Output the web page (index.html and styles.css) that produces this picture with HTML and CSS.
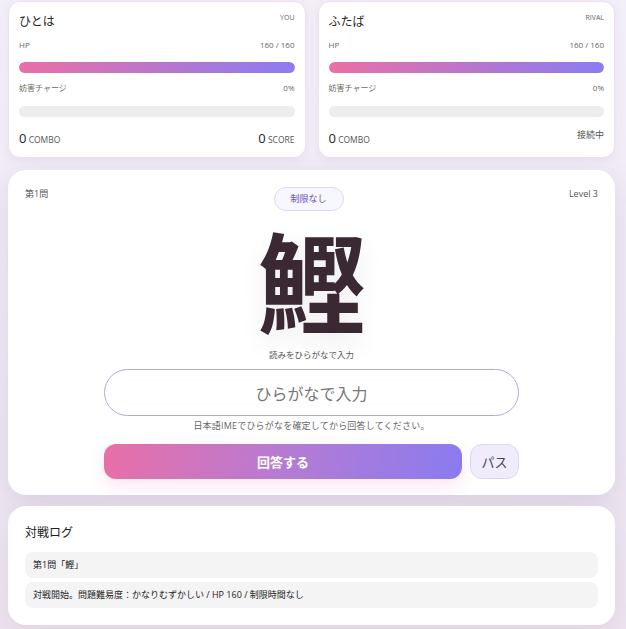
FILE: index.html
```html
<!DOCTYPE html>
<html lang="ja">
<head>
    <meta charset="UTF-8">
    <meta name="viewport" content="width=device-width, initial-scale=1.0">
    <title>難読漢字バトル</title>
    <link rel="stylesheet" href="styles.css">
</head>
<body>
    <div class="app">
        <div class="players">
            <div class="player-card">
                <div class="player-head">
                    <span class="player-name">ひとは</span>
                    <span class="player-tag">YOU</span>
                </div>
                <div class="stat">
                    <div class="stat-head"><span>HP</span><span>160 / 160</span></div>
                    <div class="bar"><div class="bar-fill" style="width: 100%"></div></div>
                </div>
                <div class="stat">
                    <div class="stat-head"><span>妨害チャージ</span><span>0%</span></div>
                    <div class="bar"><div class="bar-fill" style="width: 0%"></div></div>
                </div>
                <div class="player-foot">
                    <span class="count"><b>0</b> COMBO</span>
                    <span class="count"><b>0</b> SCORE</span>
                </div>
            </div>

            <div class="player-card">
                <div class="player-head">
                    <span class="player-name">ふたば</span>
                    <span class="player-tag">RIVAL</span>
                </div>
                <div class="stat">
                    <div class="stat-head"><span>HP</span><span>160 / 160</span></div>
                    <div class="bar"><div class="bar-fill" style="width: 100%"></div></div>
                </div>
                <div class="stat">
                    <div class="stat-head"><span>妨害チャージ</span><span>0%</span></div>
                    <div class="bar"><div class="bar-fill" style="width: 0%"></div></div>
                </div>
                <div class="player-foot">
                    <span class="count"><b>0</b> COMBO</span>
                    <span class="status">接続中</span>
                </div>
            </div>
        </div>

        <div class="question-card">
            <div class="question-head">
                <span class="q-meta">第1問</span>
                <span class="timer-pill">制限なし</span>
                <span class="q-meta">Level 3</span>
            </div>
            <div class="kanji">鰹</div>
            <div class="prompt">読みをひらがなで入力</div>
            <input class="answer-input" type="text" placeholder="ひらがなで入力" autofocus>
            <div class="hint">日本語IMEでひらがなを確定してから回答してください。</div>
            <div class="actions">
                <button class="btn-answer">回答する</button>
                <button class="btn-pass">パス</button>
            </div>
        </div>

        <div class="log-card">
            <h2>対戦ログ</h2>
            <div class="log-list">
                <div class="log-item">第1問「鰹」</div>
                <div class="log-item">対戦開始。問題難易度：かなりむずかしい / HP 160 / 制限時間なし</div>
            </div>
        </div>
    </div>
</body>
</html>
```

FILE: styles.css
```css
* {
    box-sizing: border-box;
}
body {
    margin: 0;
    font-family: 'Open Sans', 'Noto Sans CJK JP', sans-serif;
    background: linear-gradient(180deg, #f3eff9 0%, #efe9f5 60%, #ece4ee 100%);
    color: #333;
    min-height: 629px;
}
.app {
    width: 607px;
    margin-left: 8px;
    padding-top: 1px;
    display: flex;
    flex-direction: column;
}
.players {
    display: grid;
    grid-template-columns: 1fr 1fr;
    gap: 12px;
}
.player-card {
    background-color: #fff;
    border: 1px solid #eee0ec;
    border-radius: 12px;
    padding: 10px 10px 7px;
    box-shadow: 0 2px 10px rgba(140, 110, 170, 0.1);
}
.player-head {
    display: flex;
    justify-content: space-between;
    align-items: flex-start;
}
.player-name {
    font-size: 12px;
    line-height: 20px;
    color: #2a2a2a;
}
.player-tag {
    font-size: 7px;
    line-height: 12px;
    color: #666;
}
.stat {
    margin-top: 6px;
}
.stat + .stat {
    margin-top: 8px;
}
.stat-head {
    display: flex;
    justify-content: space-between;
    font-size: 8px;
    line-height: 14px;
    color: #666;
    margin-bottom: 10px;
}
.stat + .stat .stat-head {
    margin-bottom: 11px;
}
.bar {
    height: 11px;
    border-radius: 6px;
    background-color: #ededf0;
    overflow: hidden;
}
.bar-fill {
    height: 100%;
    border-radius: 6px;
    background: linear-gradient(90deg, #ea6fa6, #8b7cf2);
}
.player-foot {
    margin-top: 11px;
    display: flex;
    justify-content: space-between;
    align-items: flex-start;
}
.count {
    font-size: 8.5px;
    line-height: 20px;
    color: #555;
}
.count b {
    font-size: 13px;
    font-weight: 500;
    color: #222;
}
.status {
    font-size: 9px;
    line-height: 14px;
    color: #555;
}
.question-card {
    margin-top: 12px;
    background-color: #fff;
    border-radius: 18px;
    padding: 17px 17px 16px;
    box-shadow: 0 8px 28px rgba(120, 90, 130, 0.16);
    display: flex;
    flex-direction: column;
    align-items: center;
}
.question-head {
    align-self: stretch;
    display: flex;
    justify-content: space-between;
    align-items: flex-start;
}
.q-meta {
    font-size: 9px;
    line-height: 14px;
    color: #555;
}
.timer-pill {
    font-size: 9px;
    line-height: 22px;
    padding: 0 16px;
    border: 1px solid #e0d9f2;
    border-radius: 12px;
    background-color: #f8f6ff;
    color: #6552c0;
}
.kanji {
    margin-top: 13px;
    font-family: 'Noto Sans CJK JP', sans-serif;
    font-size: 108px;
    line-height: 108px;
    font-weight: 700;
    color: #3a2833;
    text-shadow: 0 10px 24px rgba(60, 40, 60, 0.08);
}
.prompt {
    margin-top: 16px;
    font-size: 8.5px;
    line-height: 14px;
    color: #555;
}
.answer-input {
    margin-top: 7px;
    width: 415px;
    height: 47px;
    border: 1px solid #b6a7e4;
    border-radius: 24px;
    text-align: center;
    font-family: 'Noto Sans CJK JP', sans-serif;
    font-size: 16px;
    color: #333;
    caret-color: #222;
    outline: none;
}
.answer-input::placeholder {
    color: #777;
}
.hint {
    margin-top: 3px;
    font-size: 9px;
    line-height: 14px;
    letter-spacing: 0.2px;
    color: #666;
}
.actions {
    margin-top: 11px;
    width: 415px;
    display: flex;
    gap: 8px;
}
.btn-answer {
    flex: 1;
    height: 35px;
    border: none;
    border-radius: 12px;
    background: linear-gradient(100deg, #e96fa7 0%, #b57bd3 50%, #8a7bf1 100%);
    color: #fff;
    font-family: 'Noto Sans CJK JP', sans-serif;
    font-size: 13px;
    font-weight: 700;
    box-shadow: 0 6px 16px rgba(233, 111, 167, 0.18);
    cursor: pointer;
}
.btn-pass {
    width: 49px;
    height: 35px;
    border: 1px solid #ddd5f3;
    border-radius: 12px;
    background-color: #f0ecfc;
    color: #444;
    font-family: 'Noto Sans CJK JP', sans-serif;
    font-size: 13px;
    cursor: pointer;
}
.log-card {
    margin-top: 11px;
    background-color: #fff;
    border-radius: 18px;
    padding: 17px;
    box-shadow: 0 6px 24px rgba(120, 90, 130, 0.12);
}
.log-card h2 {
    margin: 0;
    font-size: 12px;
    font-weight: 400;
    line-height: 20px;
    color: #222;
}
.log-list {
    margin-top: 9px;
    display: flex;
    flex-direction: column;
    gap: 4px;
}
.log-item {
    height: 26px;
    line-height: 26px;
    padding: 0 8px;
    border-radius: 8px;
    background-color: #f4f4f5;
    font-size: 9px;
    color: #222;
}
```
